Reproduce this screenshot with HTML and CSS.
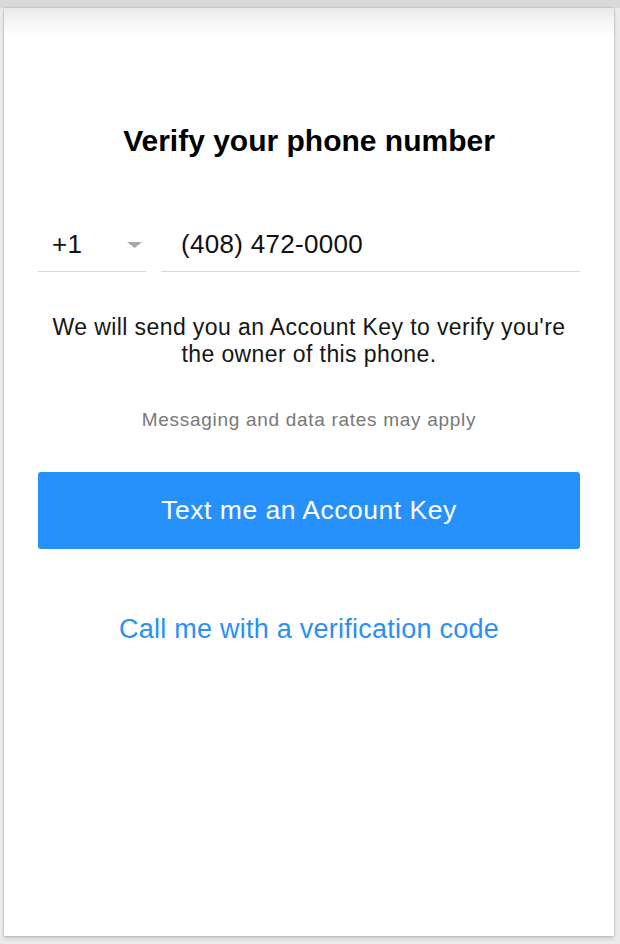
FILE: index.html
```html
<!DOCTYPE html>
<html>
<head>
<meta charset="utf-8">
<link rel="stylesheet" href="styles.css">
</head>
<body>
<div class="frame">
  <div class="card">
    <h1 class="title">Verify your phone number</h1>
    <div class="phone-row">
      <div class="country">
        <span class="code">+1</span>
        <svg class="caret" width="15" height="6" viewBox="0 0 15 6"><path d="M0 0 H15 L7.5 6 Z" fill="#a8a8a8"/></svg>
      </div>
      <div class="number">(408) 472-0000</div>
    </div>
    <p class="info">We will send you an Account Key to verify you're the owner of this phone.</p>
    <p class="note">Messaging and data rates may apply</p>
    <button class="primary">Text me an Account Key</button>
    <a class="link" href="#">Call me with a verification code</a>
  </div>
</div>
</body>
</html>
```
FILE: styles.css
```css
* { box-sizing: border-box; }
html, body { margin: 0; padding: 0; }
body {
  width: 620px;
  height: 944px;
  background: #e6e6e6;
  font-family: "Liberation Sans", Arial, sans-serif;
  overflow: hidden;
}
.frame {
  height: 944px;
  padding: 8px 6px 8px 4px;
  background: linear-gradient(#d9d9d9 0, #d9d9d9 8px, #ebebeb 8px);
}
.card {
  height: 928px;
  background: linear-gradient(#e8e8e8 0, #f8f8f8 18px, #fff 28px);
  box-shadow: 0 0 2px rgba(0,0,0,0.25), 0 3px 4px rgba(0,0,0,0.12);
  padding: 0 34px;
  display: flex;
  flex-direction: column;
  align-items: stretch;
}
.title {
  margin: 115px 0 0;
  font-size: 30px;
  font-weight: bold;
  line-height: 36px;
  text-align: center;
  color: #000;
}
.phone-row {
  margin-top: 69px;
  display: flex;
  gap: 15px;
}
.country {
  width: 108px;
  height: 44px;
  border-bottom: 1px solid #d8d8d8;
  display: flex;
  align-items: center;
  justify-content: space-between;
  padding: 0 4px 10px 14px;
}
.code, .number {
  font-size: 26px;
  letter-spacing: 0.3px;
  color: #111;
}
.number {
  flex: 1;
  height: 44px;
  border-bottom: 1px solid #d8d8d8;
  display: flex;
  align-items: center;
  padding: 0 0 10px 20px;
}
.info {
  margin: 42px 0 0;
  padding: 0 6px;
  font-size: 23px;
  letter-spacing: 0.4px;
  line-height: 27px;
  text-align: center;
  color: #161616;
}
.note {
  margin: 41px 0 0;
  font-size: 19px;
  letter-spacing: 0.7px;
  line-height: 22px;
  text-align: center;
  color: #787878;
}
.primary {
  margin-top: 41px;
  height: 77px;
  border: none;
  border-radius: 3px;
  background: #2791fb;
  color: #fff;
  font-family: "Liberation Sans", Arial, sans-serif;
  font-size: 26.5px;
  letter-spacing: 0.5px;
}
.link {
  margin-top: 65px;
  align-self: center;
  font-size: 27px;
  letter-spacing: 0.25px;
  line-height: 30px;
  color: #2a8ff7;
  text-decoration: none;
}
```
